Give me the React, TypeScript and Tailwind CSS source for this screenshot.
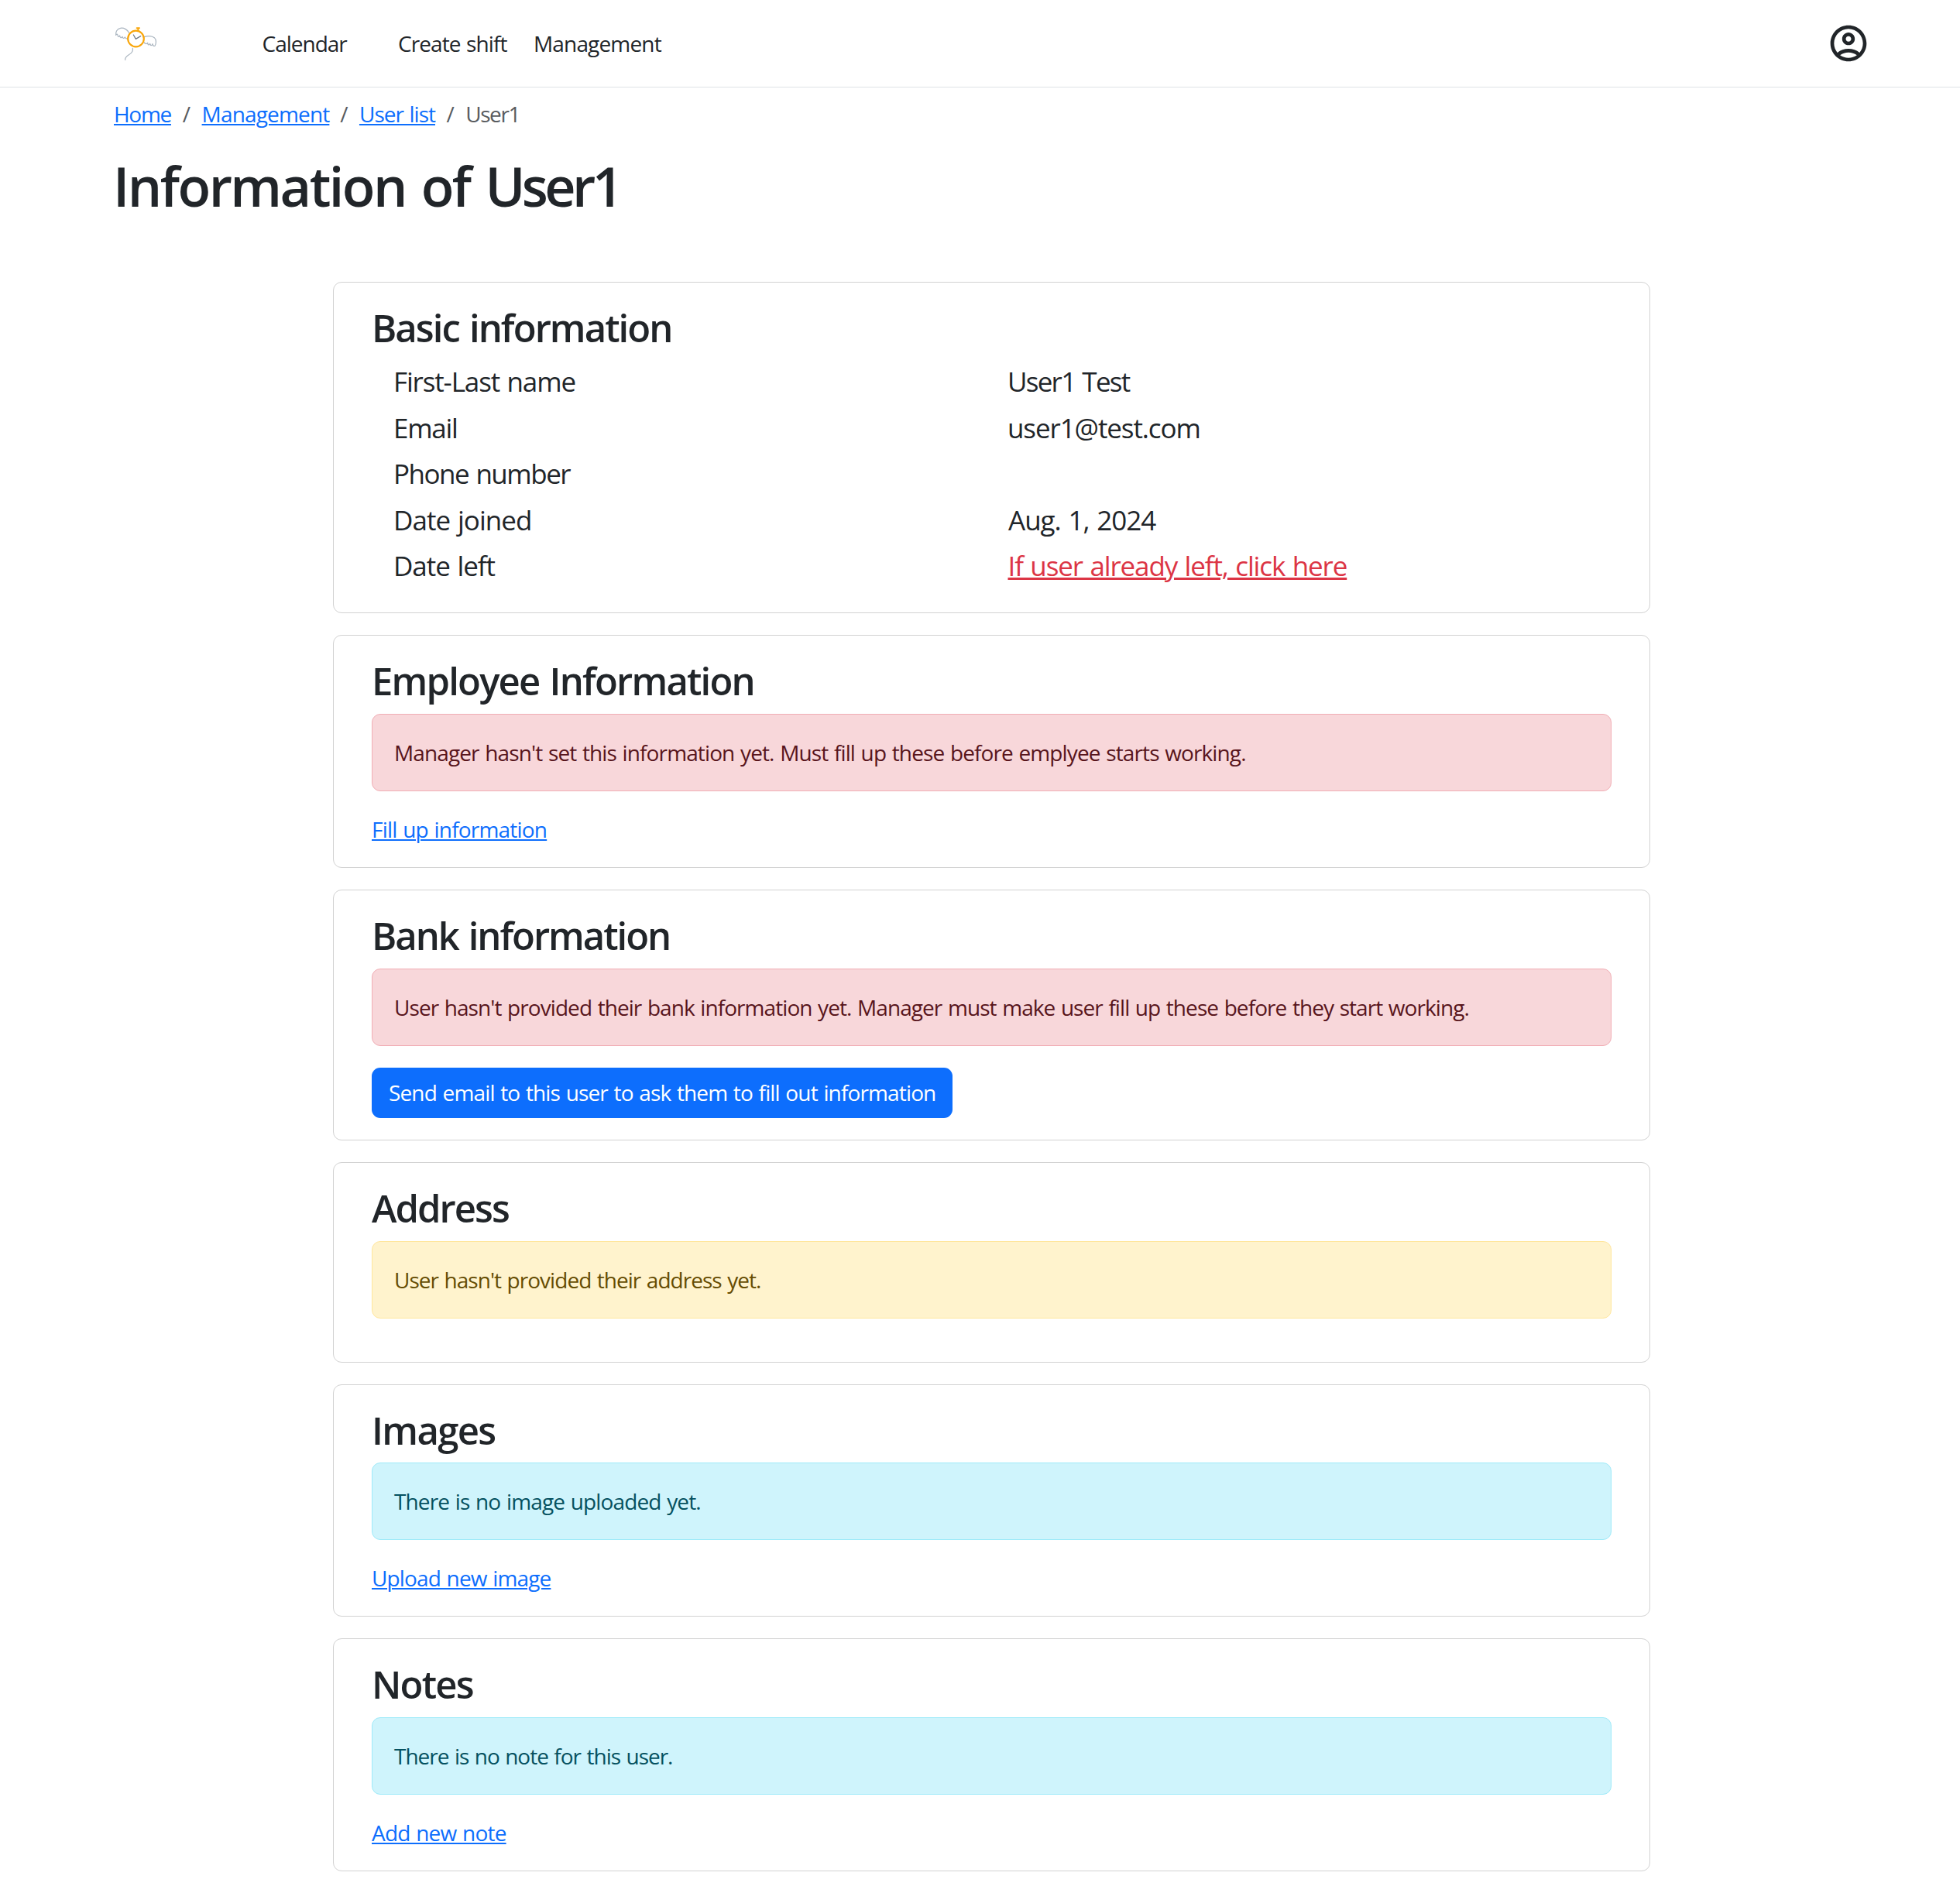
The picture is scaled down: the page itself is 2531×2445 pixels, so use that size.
import type { ReactNode } from "react";
import { clsx } from "clsx";

function Logo() {
  return (
    <svg viewBox="0 0 270 210" className="mb-[2px] h-[70px] w-[90px] shrink-0" fill="none" strokeLinecap="round" strokeLinejoin="round">
      <g stroke="#a9b4bf" strokeWidth="3.6">
        <path d="M111 68C104 55 90 47 77 49C63 52 57 64 59 76C62 71 65 71 66 76C66 83 71 84 74 78C75 87 80 89 84 82C86 90 91 90 94 84C97 90 101 91 105 90" />
        <path d="M169 83C181 78 199 79 208 86C217 94 215 109 210 118C205 120 202 116 201 110C199 118 193 118 191 109C188 117 183 115 182 106C178 112 172 110 168 104" />
        <path d="M124 127C126 140 119 147 109 152C99 158 94 163 95 172" />
      </g>
      <circle cx="136.5" cy="90" r="31" fill="#fff" stroke="#f9a60a" strokeWidth="6.5" />
      <path d="M145 58V50M140 49H150" stroke="#f9a60a" strokeWidth="6" />
      <path d="M127 75L136 91L155 80" stroke="#737d86" strokeWidth="3.8" />
    </svg>
  );
}

function AccountIcon() {
  return (
    <svg viewBox="0 0 24 24" className="h-[56px] w-[56px]" fill="currentColor">
      <path d="M12 2C6.48 2 2 6.48 2 12s4.48 10 10 10 10-4.48 10-10S17.52 2 12 2zM7.35 18.5C8.66 17.56 10.26 17 12 17s3.34.56 4.65 1.5C15.34 19.44 13.74 20 12 20s-3.34-.56-4.65-1.5zm10.79-1.38C16.45 15.8 14.32 15 12 15s-4.45.8-6.14 2.12C4.7 15.73 4 13.95 4 12c0-4.42 3.58-8 8-8s8 3.58 8 8c0 1.95-.7 3.73-1.86 5.12z" />
      <path d="M12 6c-1.93 0-3.5 1.57-3.5 3.5S10.07 13 12 13s3.5-1.57 3.5-3.5S13.93 6 12 6zm0 5c-.83 0-1.5-.67-1.5-1.5S11.17 8 12 8s1.5.67 1.5 1.5S12.83 11 12 11z" />
    </svg>
  );
}

function Card({ title, tracking, className, children }: { title: string; tracking: string; className?: string; children: ReactNode }) {
  return (
    <section className={clsx("rounded-[11px] border border-[#d2d2d2] px-[49px] pt-[28px]", className)}>
      <h2 className={clsx("mb-[14px] h-[59px] text-[49px] leading-[61px] font-semibold [word-spacing:2.2px]", tracking)}>{title}</h2>
      {children}
    </section>
  );
}

const tones = {
  danger: "border-[#f1aeb5] bg-[#f8d7da] text-[#58151c]",
  warning: "border-[#ffe69c] bg-[#fff3cd] text-[#664d03]",
  info: "border-[#9eeaf9] bg-[#cff4fc] text-[#055160]",
};

function Alert({ tone, className, children }: { tone: keyof typeof tones; className: string; children: ReactNode }) {
  return (
    <div className={clsx("mb-[28px] h-[100px] rounded-[11px] border px-[28px] py-[28px]", tones[tone], className)}>{children}</div>
  );
}

function Link({ className, children }: { className: string; children: ReactNode }) {
  return (
    <a href="#" className={clsx("text-[#0d6efd] underline decoration-2 underline-offset-2", className)}>
      {children}
    </a>
  );
}

function Slash() {
  return <span className="mx-[14px] w-[11.2px] text-center">/</span>;
}

const rows: { label: string; labelTracking: string; value: ReactNode }[] = [
  { label: "First-Last name", labelTracking: "tracking-[-1.15px]", value: <span className="tracking-[-1.75px]">User1 Test</span> },
  { label: "Email", labelTracking: "tracking-[-1.3px]", value: <span className="tracking-[-1.1px]">user1@test.com</span> },
  { label: "Phone number", labelTracking: "tracking-[-1.5px]", value: null },
  { label: "Date joined", labelTracking: "tracking-[-0.95px]", value: <span className="ml-px tracking-[-1px]">Aug. 1, 2024</span> },
  {
    label: "Date left",
    labelTracking: "tracking-[-1.04px]",
    value: (
      <a href="#" className="ml-[0.5px] tracking-[-1.14px] text-[#dc3545] underline decoration-[3px] underline-offset-2">
        If user already left, click here
      </a>
    ),
  },
];

export default function App() {
  return (
    <div className="min-h-[2445px] w-[2531px] bg-white font-['Open_Sans','Noto_Sans',sans-serif] text-[28px] leading-[42px] whitespace-nowrap text-[#212529] [word-spacing:1.2px]">
      <header className="flex h-[113px] items-center border-b border-[#dee2e6] pr-[116px] pl-[130px]">
        <Logo />
        <nav className="ml-[118.5px] flex">
          <a href="#" className="w-[175.5px] tracking-[-1px]">Calendar</a>
          <a href="#" className="w-[175px] tracking-[-0.92px]">Create shift</a>
          <a href="#" className="tracking-[-0.84px]">Management</a>
        </nav>
        <a href="#" className="ml-auto">
          <AccountIcon />
        </a>
      </header>

      <main className="px-[147px] pt-[13px]">
        <div className="flex h-[42px] text-[#595c5f]">
          <Link className="w-[74.4px] tracking-[-1.3px]">Home</Link>
          <Slash />
          <Link className="w-[164.2px] tracking-[-0.84px]">Management</Link>
          <Slash />
          <Link className="w-[98px] tracking-[-0.98px]">User list</Link>
          <Slash />
          <span className="tracking-[-1.4px]">User1</span>
        </div>
        <h1 className="mt-[29px] -ml-px h-[84px] text-[70px] leading-[86px] font-semibold tracking-[-2.55px] [word-spacing:4.2px]">
          Information of <span className="tracking-[-4.6px]">User1</span>
        </h1>

        <div className="mt-[83px] ml-[283px] flex w-[1701px] flex-col gap-[28px]">
          <Card title="Basic information" tracking="tracking-[-1.93px]" className="h-[428px]">
            <dl className="px-[28px] text-[35px] leading-[54px] [word-spacing:1.6px]">
              {rows.map((row) => (
                <div key={row.label} className="mb-[7px] grid h-[52.5px] grid-cols-[793px_1fr]">
                  <dt className={row.labelTracking}>{row.label}</dt>
                  <dd>{row.value}</dd>
                </div>
              ))}
            </dl>
          </Card>

          <Card title="Employee Information" tracking="tracking-[-1.8px]" className="h-[301px]">
            <Alert tone="danger" className="tracking-[-0.88px]">
              Manager hasn't set this information yet. Must fill up these before emplyee starts working.
            </Alert>
            <Link className="tracking-[-0.8px]">Fill up information</Link>
          </Card>

          <Card title="Bank information" tracking="tracking-[-2.03px]" className="h-[324px]">
            <Alert tone="danger" className="tracking-[-0.93px]">
              User hasn't provided their bank information yet. Manager must make user fill up these before they start working.
            </Alert>
            <button
              type="button"
              className="block h-[65px] w-[750px] rounded-[11px] bg-[#0d6efd] px-[22px] pb-px text-left tracking-[-0.86px] text-white [word-spacing:1.2px]"
            >
              Send email to this user to ask them to fill out information
            </button>
          </Card>

          <Card title="Address" tracking="tracking-[-1.94px]" className="h-[259px]">
            <Alert tone="warning" className="tracking-[-0.97px]">User hasn't provided their address yet.</Alert>
          </Card>

          <Card title="Images" tracking="tracking-[-1.66px]" className="h-[300px]">
            <Alert tone="info" className="-mt-px tracking-[-0.865px]">There is no image uploaded yet.</Alert>
            <Link className="tracking-[-0.86px]">Upload new image</Link>
          </Card>

          <Card title="Notes" tracking="tracking-[-1.8px]" className="h-[301px]">
            <Alert tone="info" className="tracking-[-1.01px]">There is no note for this user.</Alert>
            <Link className="tracking-[-0.8px]">Add new note</Link>
          </Card>
        </div>
      </main>
    </div>
  );
}
